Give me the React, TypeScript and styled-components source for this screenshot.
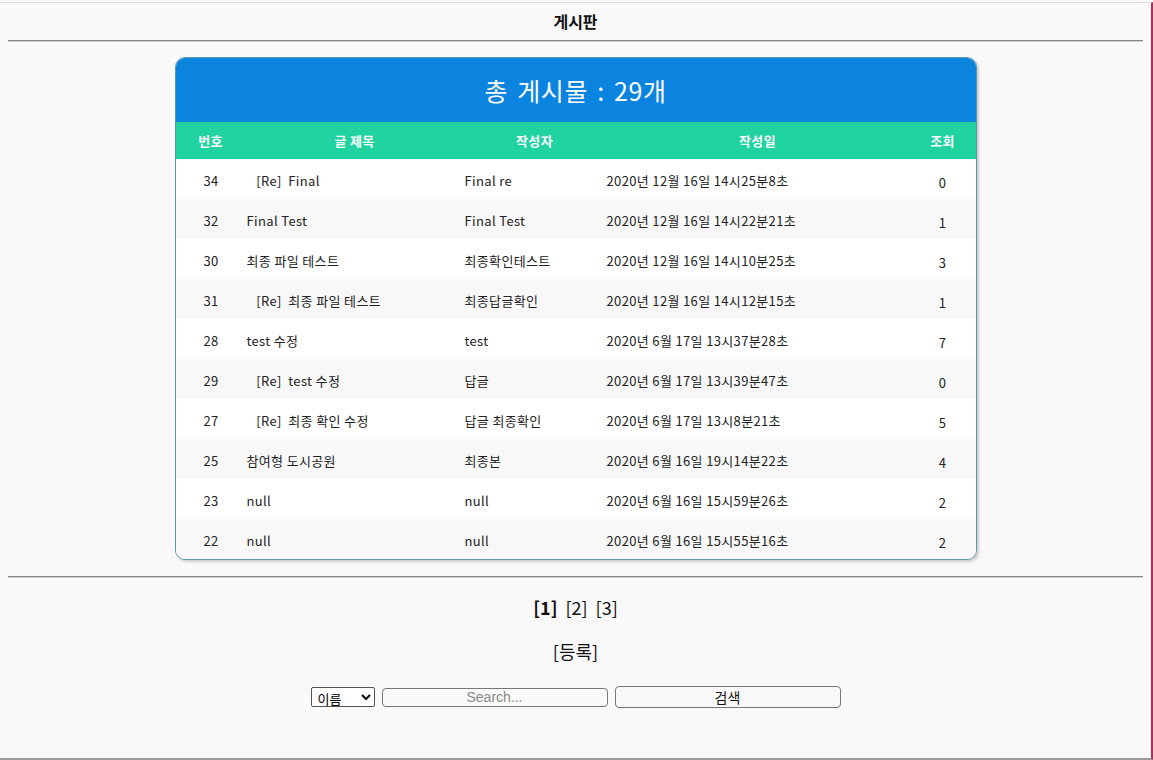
import React from "react";
import styled, { createGlobalStyle } from "styled-components";

const Global = createGlobalStyle`
  html, body { margin: 0; padding: 0; background: #f9f9f9; }
  body { font-family: "Open Sans", "Noto Sans CJK KR", sans-serif; color: #111; }
`;

const Frame = styled.div`
  box-sizing: border-box;
  width: 1153px;
  height: 758px;
  margin-top: 2px;
  border-top: 1px solid #dcdcdc;
  border-right: 2px solid #a8305c;
  border-bottom: 2px solid #9a9a9a;
  display: flex;
  flex-direction: column;
  align-items: stretch;
`;

const PageTitle = styled.h1`
  margin: 0;
  height: 37px;
  line-height: 36px;
  text-align: center;
  font-size: 16px;
  font-weight: 700;
  font-family: "Noto Sans CJK KR", sans-serif;
`;

const Rule = styled.hr`
  margin: 0 8px;
  border: none;
  border-top: 1px solid #888;
  border-bottom: 1px solid #ccc;
  height: 0;
`;

const Card = styled.div`
  align-self: center;
  width: 800px;
  margin: 15px 0 16px 0;
  border: 1px solid #5b98a6;
  border-radius: 10px;
  overflow: hidden;
  background: #fff;
  box-shadow: 2px 2px 3px rgba(0, 0, 0, 0.18);
`;

const Banner = styled.div`
  height: 64px;
  background: #0a84df;
  color: #fff;
  font-size: 25px;
  letter-spacing: 0.6px;
  word-spacing: 3px;
  font-family: "Noto Sans CJK KR", sans-serif;
  display: flex;
  align-items: center;
  justify-content: center;
  padding-bottom: 1px;
  box-sizing: border-box;
`;

const Table = styled.table`
  width: 100%;
  border-collapse: collapse;
  table-layout: fixed;
  font-size: 13px;
  letter-spacing: 0.35px;
  font-family: "Noto Sans CJK KR", sans-serif;
`;

const Th = styled.th<{ $w: number }>`
  width: ${(p) => p.$w}px;
  height: 37px;
  padding: 0;
  background: #20d29f;
  color: #fff;
  font-weight: 700;
  font-size: 13px;
  text-align: center;
`;

const Tr = styled.tr<{ $alt: boolean }>`
  height: 40px;
  background: ${(p) => (p.$alt ? "#f8f8f8" : "#ffffff")};
`;

const Td = styled.td<{ $center?: boolean; $low?: boolean }>`
  padding: ${(p) => (p.$low ? "7px 0 0 0" : "3px 0 0 1px")};
  text-align: ${(p) => (p.$center ? "center" : "left")};
  color: #222;
  white-space: pre;
`;

const Pager = styled.div`
  margin-top: 17px;
  display: flex;
  justify-content: center;
  gap: 8px;
  font-size: 18px;
  font-family: "Noto Sans CJK KR", sans-serif;
  line-height: 24px;
`;

const PageLink = styled.span<{ $current?: boolean }>`
  font-weight: ${(p) => (p.$current ? 700 : 400)};
`;

const Write = styled.div`
  margin-top: 20px;
  text-align: center;
  font-size: 18px;
  font-family: "Noto Sans CJK KR", sans-serif;
  line-height: 24px;
`;

const SearchRow = styled.div`
  margin-top: 23px;
  display: flex;
  justify-content: center;
  align-items: center;
  gap: 7px;
  padding-left: 0px;
`;

const Select = styled.select`
  width: 64px;
  height: 20px;
  font-size: 13px;
  font-family: "Noto Sans CJK KR", sans-serif;
  border: 1px solid #555;
  border-radius: 2px;
  background: #fff;
  padding: 0 0 0 2px;
`;

const Input = styled.input`
  box-sizing: border-box;
  width: 226px;
  height: 19px;
  border: 1px solid #777;
  border-radius: 4px;
  text-align: center;
  font-size: 14px;
  font-family: "Liberation Sans", sans-serif;
  background: #fafafa;
  &::placeholder { color: #888; }
`;

const Button = styled.button`
  box-sizing: border-box;
  width: 226px;
  height: 22px;
  border: 1px solid #777;
  border-radius: 4px;
  background: #f8f8f8;
  font-size: 14px;
  font-family: "Noto Sans CJK KR", sans-serif;
  padding: 0;
  color: #111;
`;

const rows = [
  ["34", "   [Re]  Final", "Final re", "2020년 12월 16일 14시25분8초", "0"],
  ["32", "Final Test", "Final Test", "2020년 12월 16일 14시22분21초", "1"],
  ["30", "최종 파일 테스트", "최종확인테스트", "2020년 12월 16일 14시10분25초", "3"],
  ["31", "   [Re]  최종 파일 테스트", "최종답글확인", "2020년 12월 16일 14시12분15초", "1"],
  ["28", "test 수정", "test", "2020년 6월 17일 13시37분28초", "7"],
  ["29", "   [Re]  test 수정", "답글", "2020년 6월 17일 13시39분47초", "0"],
  ["27", "   [Re]  최종 확인 수정", "답글 최종확인", "2020년 6월 17일 13시8분21초", "5"],
  ["25", "참여형 도시공원", "최종본", "2020년 6월 16일 19시14분22초", "4"],
  ["23", "null", "null", "2020년 6월 16일 15시59분26초", "2"],
  ["22", "null", "null", "2020년 6월 16일 15시55분16초", "2"],
];

export default function App() {
  return (
    <>
      <Global />
      <Frame>
        <PageTitle>게시판</PageTitle>
        <Rule />
        <Card>
          <Banner>총 게시물 : 29개</Banner>
          <Table>
            <thead>
              <tr>
                <Th $w={70}>번호</Th>
                <Th $w={218}>글 제목</Th>
                <Th $w={142}>작성자</Th>
                <Th $w={304}>작성일</Th>
                <Th $w={66}>조회</Th>
              </tr>
            </thead>
            <tbody>
              {rows.map((r, i) => (
                <Tr key={r[0]} $alt={i % 2 === 1}>
                  <Td $center>{r[0]}</Td>
                  <Td>{r[1]}</Td>
                  <Td>{r[2]}</Td>
                  <Td>{r[3]}</Td>
                  <Td $center $low>{r[4]}</Td>
                </Tr>
              ))}
            </tbody>
          </Table>
        </Card>
        <Rule />
        <Pager>
          <PageLink $current>[1]</PageLink>
          <PageLink>[2]</PageLink>
          <PageLink>[3]</PageLink>
        </Pager>
        <Write>[등록]</Write>
        <SearchRow>
          <Select defaultValue="name">
            <option value="name">이름</option>
            <option value="title">제목</option>
          </Select>
          <Input placeholder="Search..." />
          <Button>검색</Button>
        </SearchRow>
      </Frame>
    </>
  );
}
